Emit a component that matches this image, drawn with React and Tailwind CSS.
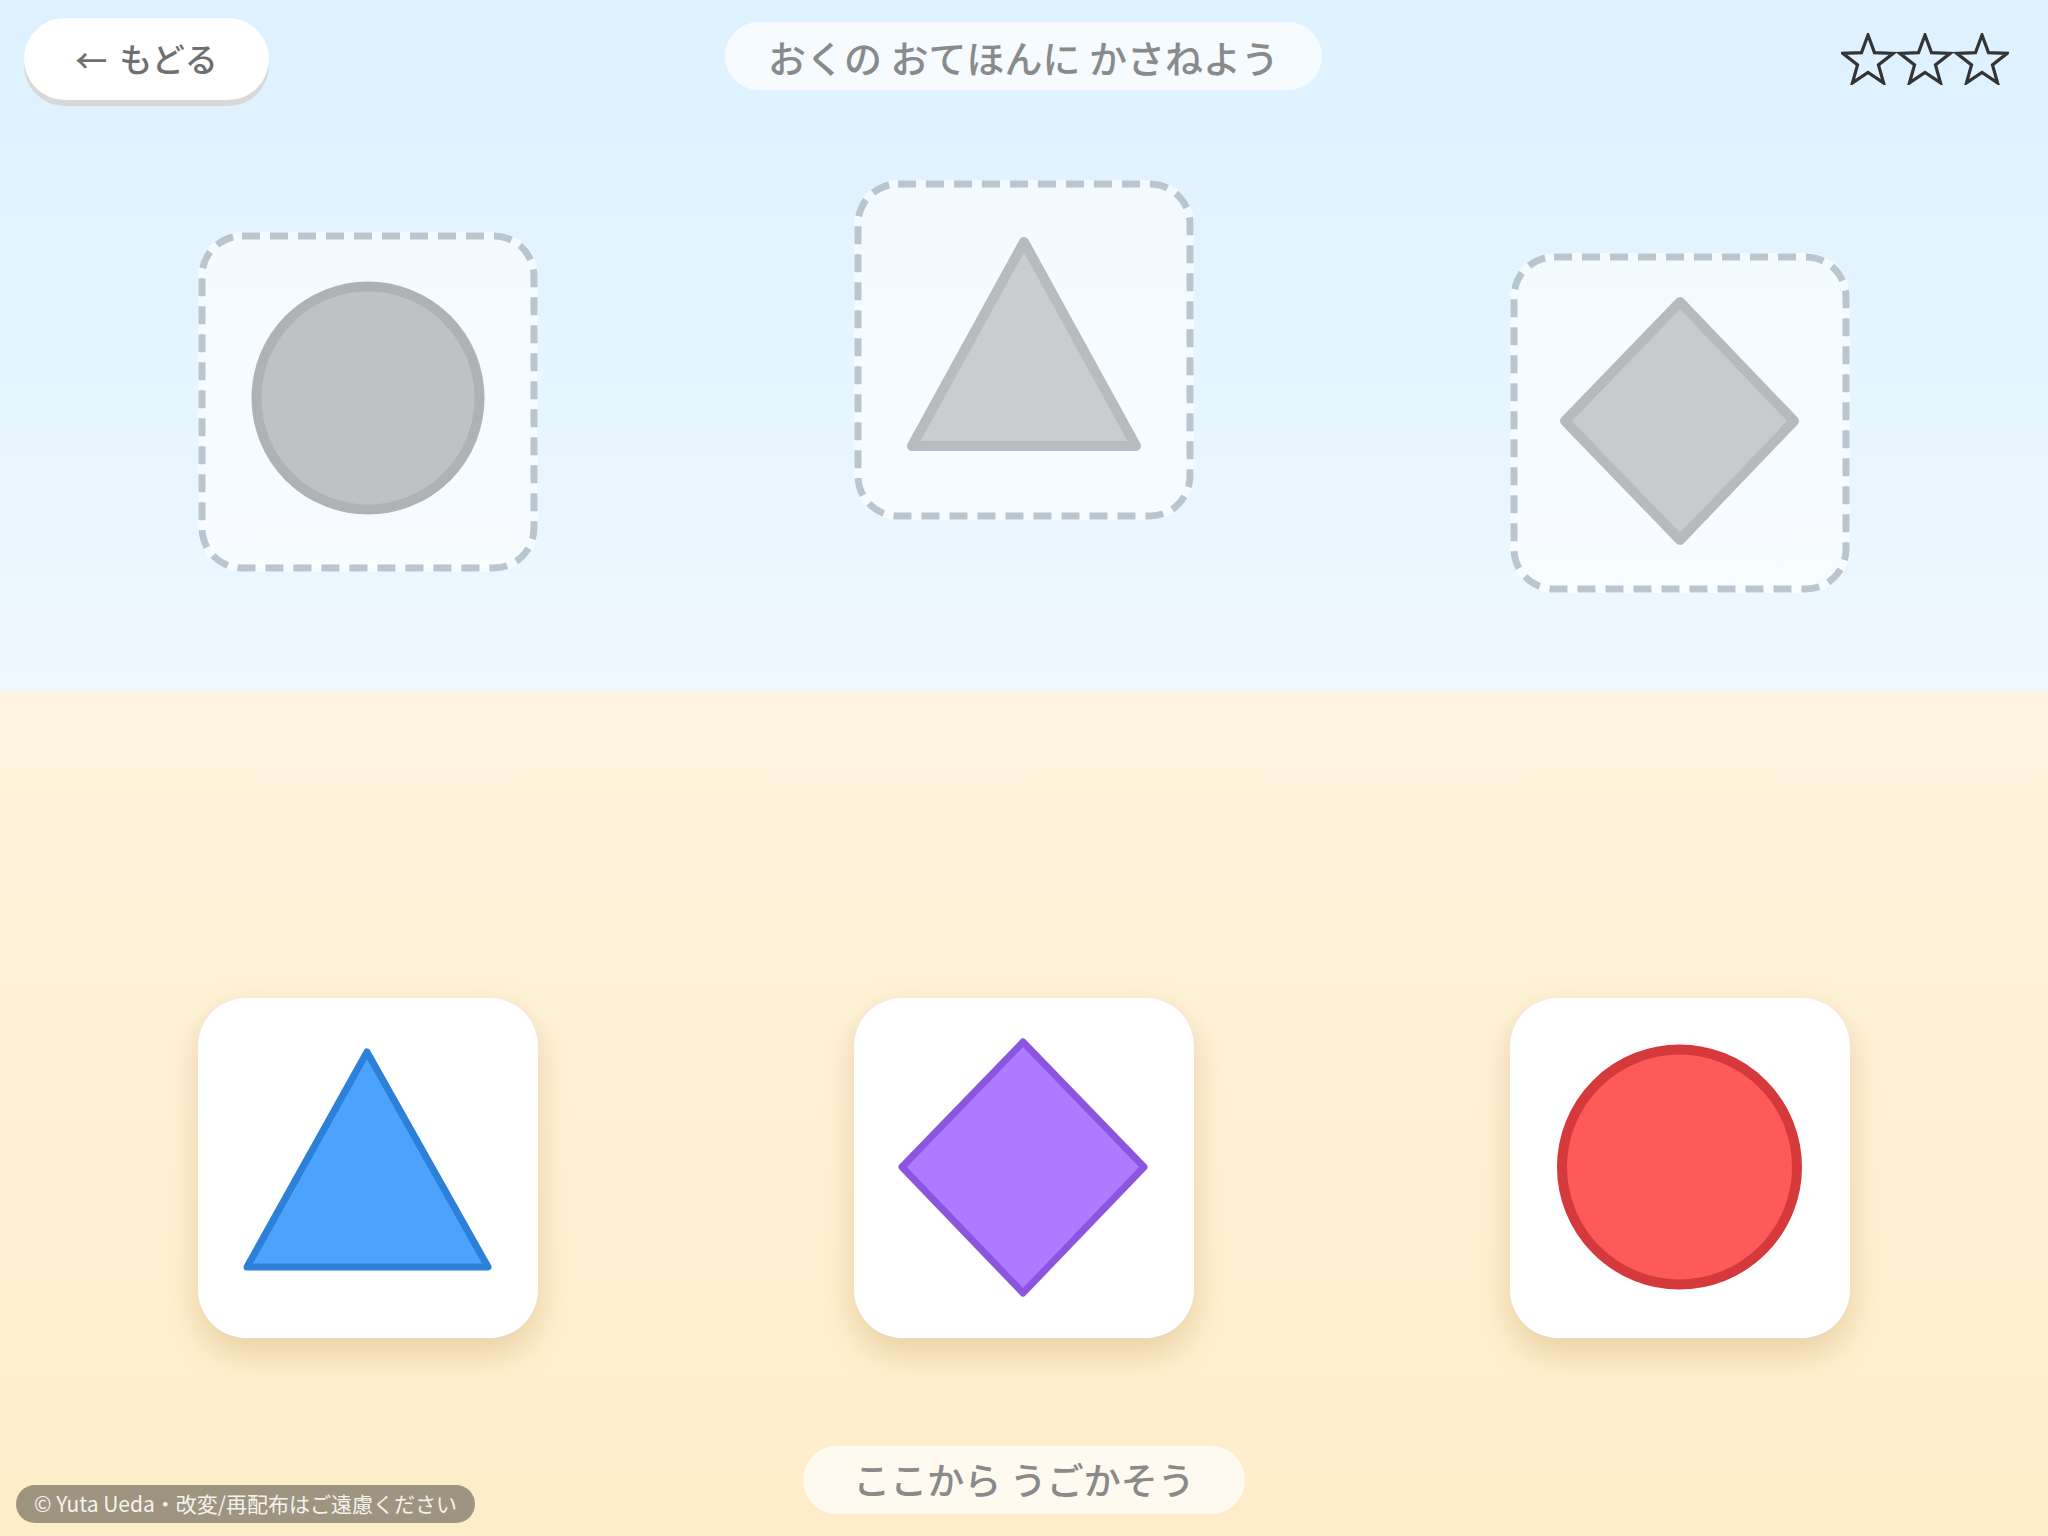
import React from 'react'

const font = { fontFamily: '"Noto Sans CJK JP", "Noto Sans", sans-serif' }

function starPoints(cx, cy, R, r) {
  const pts = []
  for (let i = 0; i < 10; i++) {
    const rad = i % 2 === 0 ? R : r
    const a = (Math.PI / 5) * i - Math.PI / 2
    pts.push(`${(cx + rad * Math.cos(a)).toFixed(2)},${(cy + rad * Math.sin(a)).toFixed(2)}`)
  }
  return pts.join(' ')
}

function Stars() {
  return (
    <svg width="168" height="52" viewBox="0 0 168 52" className="block">
      {[27, 84, 141].map((cx) => (
        <polygon
          key={cx}
          points={starPoints(cx, 28.5, 26.5, 11)}
          fill="none"
          stroke="#343434"
          strokeWidth="3.2"
          strokeLinejoin="miter"
        />
      ))}
    </svg>
  )
}

function TargetBox({ className, children }) {
  return (
    <div className={`h-[340px] w-[340px] shrink-0 rounded-[44px] bg-white/60 ${className}`}>
      <svg viewBox="0 0 340 340" className="block h-full w-full">
        <rect
          x="4"
          y="4"
          width="332"
          height="332"
          rx="40"
          fill="none"
          stroke="#b9c6d0"
          strokeWidth="7"
          strokeDasharray="18 10"
        />
        {children}
      </svg>
    </div>
  )
}

function PieceCard({ children }) {
  return (
    <div className="h-[340px] w-[340px] shrink-0 rounded-[48px] bg-white shadow-[0_14px_32px_rgba(175,135,60,0.3)]">
      <svg viewBox="0 0 340 340" className="block h-full w-full">
        {children}
      </svg>
    </div>
  )
}

export default function App() {
  return (
    <div className="relative flex h-[1536px] w-[2048px] flex-col overflow-hidden" style={font}>
      <section className="flex h-[691px] flex-col bg-gradient-to-b from-[#ddf1ff] to-[#eef8ff]">
        <header className="flex h-[100px] items-start pl-[24px] pr-[39px]">
          <button className="mt-[18px] flex h-[82px] w-[245px] items-center justify-center gap-[12px] rounded-full bg-white text-[33px] font-medium text-[#6f6f6f] shadow-[0_6px_0_#d8d8d8]">
            <span className="text-[32px]">←</span>
            <span>もどる</span>
          </button>
          <div className="ml-[456px] mt-[22px] flex h-[68px] w-[597px] items-center justify-center rounded-full bg-[#f6fbff] text-[38px] font-medium text-[#8a8a8a]">
            おくの おてほんに かさねよう
          </div>
          <div className="ml-auto mt-[33px]">
            <Stars />
          </div>
        </header>

        <div className="flex items-start justify-center gap-[316px]">
          <TargetBox className="mt-[132px]">
            <circle cx="170" cy="166" r="111.5" fill="#bec2c5" stroke="#aeb2b5" strokeWidth="10" />
          </TargetBox>
          <TargetBox className="mt-[80px]">
            <polygon
              points="170,62 58,266 282,266"
              fill="#c9cdd0"
              stroke="#b8bcbf"
              strokeWidth="10"
              strokeLinejoin="round"
            />
          </TargetBox>
          <TargetBox className="mt-[153px]">
            <polygon
              points="170,49 284,168 170,287 55,168"
              fill="#c7cbce"
              stroke="#b6babd"
              strokeWidth="10"
              strokeLinejoin="round"
            />
          </TargetBox>
        </div>
      </section>

      <section className="flex flex-1 flex-col items-center bg-gradient-to-b from-[#fff4df] to-[#ffedc9]">
        <div className="mt-[307px] flex gap-[316px]">
          <PieceCard>
            <polygon
              points="169,54 290,269 49,269"
              fill="#4ba3fe"
              stroke="#2c80d8"
              strokeWidth="7"
              strokeLinejoin="round"
            />
          </PieceCard>
          <PieceCard>
            <polygon
              points="169,44 290,169 169,295 48,169"
              fill="#b07aff"
              stroke="#8b55e0"
              strokeWidth="7"
              strokeLinejoin="round"
            />
          </PieceCard>
          <PieceCard>
            <circle cx="169.5" cy="169" r="117.5" fill="#ff5a5a" stroke="#d6393b" strokeWidth="10" />
          </PieceCard>
        </div>

        <div className="mt-[108px] flex h-[68px] w-[442px] items-center justify-center rounded-full bg-[#fffaf0] text-[37px] font-medium text-[#8a8a8a]">
          ここから うごかそう
        </div>
      </section>

      <div className="absolute bottom-[13px] left-[16px] flex h-[38px] w-[459px] items-center justify-center rounded-full bg-[#9e9480] text-[21px] text-[#f6f3ec]">
        © Yuta Ueda・改変/再配布はご遠慮ください
      </div>
    </div>
  )
}
